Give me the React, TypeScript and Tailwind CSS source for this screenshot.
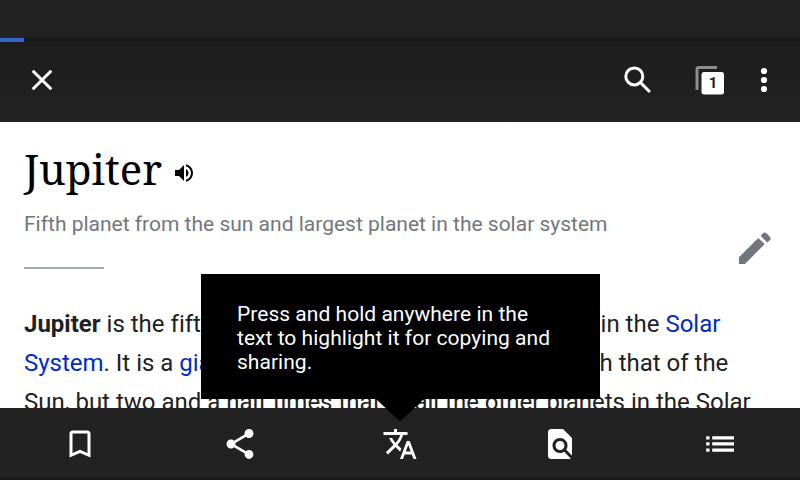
import type { ReactNode } from "react";

function Icon({ size = 36, className = "", children }: { size?: number; className?: string; children: ReactNode }) {
  return (
    <svg width={size} height={size} viewBox="0 0 24 24" fill="currentColor" className={`block shrink-0 ${className}`}>
      {children}
    </svg>
  );
}

function TopBar() {
  return (
    <header className="flex h-20 shrink-0 items-center bg-linear-to-b from-[#1d1d1d] to-[#222222] pb-1 pl-6 text-white">
      <svg width="36" height="36" viewBox="0 0 36 36" className="block" fill="none" stroke="currentColor" strokeWidth="3">
        <path d="M8.7 8.7 27.3 27.3M27.3 8.7 8.7 27.3" />
      </svg>
      <div className="ml-auto flex items-center">
        <svg width="36" height="36" viewBox="0 0 36 36" className="block" fill="none" stroke="currentColor" strokeWidth="3">
          <circle cx="14.3" cy="14.4" r="8.5" />
          <path d="M20.3 20.4 29.9 30" />
        </svg>
        <div className="relative ml-[38px] h-9 w-9">
          <svg width="36" height="36" viewBox="0 0 36 36" className="block">
            <path d="M23 5.5H4.5Q3 5.5 3 7.5V28" fill="none" stroke="#8e8e8e" strokeWidth="3" />
            <rect x="6.5" y="9" width="24" height="24" rx="3" fill="#1f1f1f" />
            <rect x="7.5" y="10" width="22.5" height="22.5" rx="2.5" fill="white" />
          </svg>
          <span className="absolute top-[10px] left-[8px] w-[22px] text-center font-['Roboto',sans-serif] text-[15px] leading-[23px] font-bold text-[#202122]">1</span>
        </div>
        <svg width="36" height="36" viewBox="0 0 36 36" fill="currentColor" className="mr-[18px] ml-[16px] block">
          <circle cx="18" cy="9" r="3.1" />
          <circle cx="18" cy="18" r="3.1" />
          <circle cx="18" cy="27" r="3.1" />
        </svg>
      </div>
    </header>
  );
}

function Article() {
  return (
    <main className="h-[286px] shrink-0 overflow-hidden bg-white px-6 pt-[21px]">
      <div className="flex h-[52px] items-center">
        <h1 className="w-[148px] font-['Noto_Serif','Droid_Serif','DejaVu_Serif_Condensed','DejaVu_Serif',serif] text-[42px] leading-[52px] text-black">Jupiter</h1>
        <Icon size={24} className="mt-2 text-black">
          <path d="M3 9v6h4l5 5V4L7 9H3zm13.5 3c0-1.77-1.02-3.29-2.5-4.03v8.05c1.48-.73 2.5-2.25 2.5-4.02zM14 3.23v2.06c2.89.86 5 3.54 5 6.71s-2.11 5.85-5 6.71v2.06c4.01-.91 7-4.49 7-8.77s-2.99-7.86-7-8.77z" />
        </Icon>
      </div>
      <div className="flex h-[110px] justify-between pt-[3px]">
        <div className="pt-[11px]">
          <p className="text-[21px] leading-[30px] whitespace-nowrap text-[#72777d]">Fifth planet from the sun and largest planet in the solar system</p>
          <div className="mt-[28px] h-[2px] w-20 bg-[#a2a9b1]" />
        </div>
        <svg width="34" height="34" viewBox="0 0 34 34" fill="#72777d" className="mt-[33px] mr-[5px] block">
          <path d="M2 33V26.2L21.3 6.9 27.6 13.2 8 33ZM23.6 4.7 26.2 2.1Q27.7.7 29.2 2.1L33 5.9Q34.4 7.5 33 9L30.2 11.5Z" />
        </svg>
      </div>
      <p className="text-[24px] leading-[39px] whitespace-nowrap text-[#202122]">
        <span className="tracking-[0.005px]">
          <b>Jupiter</b> is the fifth planet from the Sun and the largest in the <a className="text-[#002dc4]">Solar</a>
        </span>
        <br />
        <span className="tracking-[-0.01px]">
          <a className="text-[#002dc4]">System</a>. It is a <a className="text-[#002dc4]">giant planet</a> with a mass one-thousandth that of the
        </span>
        <br />
        Sun, but two and a half times that of all the other planets in the Solar
      </p>
    </main>
  );
}

function BottomBar() {
  return (
    <nav className="grid h-[72px] shrink-0 grid-cols-5 place-items-center border-b-2 border-[#1b181b] bg-[#222222] pt-[2px] text-white">
      <Icon>
        <path d="M17 3H7c-1.1 0-1.99.9-1.99 2L5 21l7-3 7 3V5c0-1.1-.9-2-2-2zm0 15l-5-2.18L7 18V5h10v13z" />
      </Icon>
      <Icon>
        <path d="M18 16.08c-.76 0-1.44.3-1.96.77L8.91 12.7c.05-.23.09-.46.09-.7s-.04-.47-.09-.7l7.05-4.11c.54.5 1.25.81 2.04.81 1.66 0 3-1.34 3-3s-1.34-3-3-3-3 1.34-3 3c0 .24.04.47.09.7L8.04 9.81C7.5 9.31 6.79 9 6 9c-1.66 0-3 1.34-3 3s1.34 3 3 3c.79 0 1.5-.31 2.04-.81l7.12 4.16c-.05.21-.08.43-.08.65 0 1.61 1.31 2.92 2.92 2.92s2.92-1.31 2.92-2.92-1.31-2.92-2.92-2.92z" />
      </Icon>
      <Icon>
        <path d="M12.87 15.07l-2.54-2.51.03-.03c1.74-1.94 2.98-4.17 3.71-6.53H17V4h-7V2H8v2H1v1.99h11.17C11.5 7.92 10.44 9.75 9 11.35 8.07 10.32 7.3 9.19 6.69 8h-2c.73 1.63 1.73 3.17 2.98 4.56l-5.09 5.02L4 19l5-5 3.11 3.11.76-2.04zM18.5 10h-2L12 22h2l1.12-3h4.75L21 22h2l-4.5-12zm-2.62 7l1.62-4.33L19.12 17h-3.24z" />
      </Icon>
      <Icon>
        <path d="M20 19.59V8l-6-6H6c-1.1 0-1.99.9-1.99 2L4 20c0 1.1.89 2 1.99 2H18c.45 0 .85-.15 1.19-.4l-4.43-4.43c-.8.52-1.74.83-2.76.83-2.76 0-5-2.24-5-5s2.24-5 5-5 5 2.24 5 5c0 1.02-.31 1.96-.83 2.75L20 19.59zM9 13c0 1.66 1.34 3 3 3s3-1.34 3-3-1.34-3-3-3-3 1.34-3 3z" />
      </Icon>
      <svg width="36" height="36" viewBox="0 0 36 36" fill="currentColor" className="block">
        <path d="M4.2 10.2h3.3v3.3H4.2zM10.2 10.2H32v3.3H10.2zM4.2 16.3h3.3v3.3H4.2zM10.2 16.3H32v3.3H10.2zM4.2 22.4h3.3v3.3H4.2zM10.2 22.4H32v3.3H10.2z" />
      </svg>
    </nav>
  );
}

function Tooltip() {
  return (
    <div className="absolute top-[274px] left-[201px] w-[399px]">
      <div className="h-[125px] bg-black px-9 pt-7 text-[21px] leading-6 tracking-[0.03px] whitespace-nowrap text-white">
        Press and hold anywhere in the
        <br />
        text to highlight it for copying and
        <br />
        sharing.
      </div>
      <svg width="48" height="23" viewBox="0 0 48 23" className="ml-[175px] block">
        <path d="M0 0H48L24 22.5Z" fill="black" />
      </svg>
    </div>
  );
}

export default function App() {
  return (
    <div className="relative flex h-[480px] w-[800px] flex-col overflow-hidden bg-[#222222] font-['Roboto',sans-serif]">
      <div className="h-[38px] shrink-0" />
      <div className="h-1 shrink-0 bg-[#181818]">
        <div className="h-full w-6 bg-[#3366cc]" />
      </div>
      <TopBar />
      <Article />
      <BottomBar />
      <Tooltip />
    </div>
  );
}
